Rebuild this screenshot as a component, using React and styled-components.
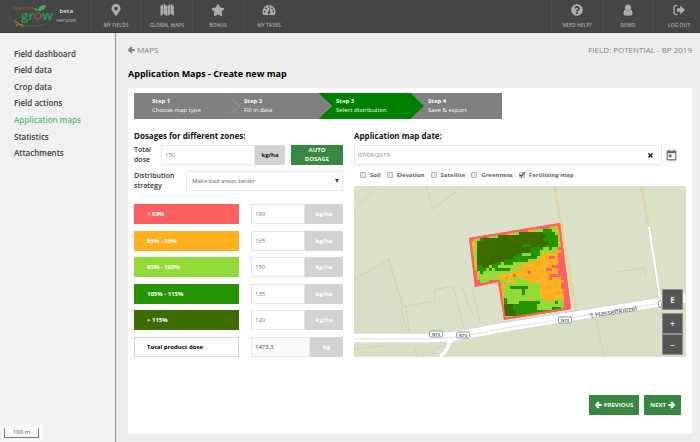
import React from "react";
import styled, { createGlobalStyle, css } from "styled-components";
import { FaMapMarkerAlt, FaStar, FaQuestionCircle, FaTimes } from "react-icons/fa";
import { MdToday } from "react-icons/md";

const GlobalStyle = createGlobalStyle`
  *, *::before, *::after { box-sizing: border-box; }
  body { margin: 0; background: #ededed; }
  body, button, input, select {
    font-family: "Open Sans", "Noto Sans", sans-serif;
    font-size: 6px;
    line-height: 10px;
    color: #333;
  }
  button { cursor: pointer; }
`;

const Page = styled.div`
  display: flex;
  flex-direction: column;
  min-height: 100vh;
`;

const TopBar = styled.header`
  display: flex;
  height: 33px;
  overflow: hidden;
  background: #454545;
  border-bottom: 1px solid #3a3a3a;
`;

const Brand = styled.a`
  display: flex;
  align-items: center;
  gap: 2px;
  width: 90px;
  padding-left: 12px;
  text-decoration: none;
  color: #bdbdbd;
`;

const BrandNote = styled.span`
  line-height: 9px;
  text-align: center;
  strong { display: block; color: #cfcfcf; }
`;

const TopNav = styled.nav`
  display: flex;
  flex: 1;
  margin-right: -4px;
`;

const TopLink = styled.a`
  display: flex;
  flex-direction: column;
  align-items: center;
  gap: 4px;
  width: 51px;
  padding-top: 4px;
  border-left: 1px solid #4f4f4f;
  color: #adadad;
  font-size: 5px;
  font-weight: 600;
  line-height: 10px;
  white-space: nowrap;
  text-decoration: none;
  margin-left: ${(p) => (p.$push ? "auto" : "0")};
  svg { width: 14px; height: 12px; flex: none; }
`;

const Body = styled.div`
  display: flex;
  flex: 1;
`;

const Sidebar = styled.aside`
  display: flex;
  flex-direction: column;
  width: 116px;
  padding-top: 13px;
  background: #f0f0f0;
  border-right: 1px solid #8d8d8d;
`;

const SideList = styled.ul`
  display: grid;
  grid-auto-rows: 1fr;
  align-items: center;
  height: 116px;
  margin: 0;
  padding: 0 0 0 14px;
  list-style: none;
`;

const SideLink = styled.a`
  font-size: 8px;
  font-weight: 600;
  text-decoration: none;
  color: ${(p) => (p.$active ? "#5cb973" : "#3a3a3a")};
`;

const ScaleBox = styled.div`
  align-self: flex-start;
  margin: auto 0 1px 1px;
  padding: 3px;
  background: #f8f8f8;
`;

const ScaleBar = styled.div`
  width: 35px;
  border: 1px solid #777;
  border-top: 0;
  line-height: 9px;
  text-align: center;
  color: #555;
`;

const Main = styled.main`
  display: flex;
  flex-direction: column;
  flex: 1;
  min-width: 0;
  padding: 11px 8px 8px 12px;
`;

const Crumbs = styled.div`
  display: flex;
  justify-content: space-between;
  font-size: 8px;
  font-weight: 500;
  line-height: 12px;
  color: #80807a;
`;

const BackLink = styled.a`
  display: flex;
  align-items: center;
  gap: 2px;
  color: inherit;
  text-decoration: none;
`;

const Title = styled.h1`
  margin: 11px 0 7px;
  font-size: 9px;
  font-weight: 700;
  line-height: 14px;
  color: #000;
`;

const Panel = styled.section`
  flex: 1;
  padding: 5px 6px;
  background: #fff;
`;

const Steps = styled.ol`
  display: grid;
  grid-template-columns: repeat(4, 92px);
  margin: 0;
  padding: 0;
  list-style: none;
`;

const chevron = css`
  content: "";
  position: absolute;
  top: 0;
  left: 100%;
  width: 13px;
  height: 100%;
  clip-path: polygon(0 0, 100% 50%, 0 100%);
`;

const Step = styled.li`
  position: relative;
  z-index: ${(p) => p.$order};
  height: 26px;
  padding: 4px 0 0 18px;
  background: ${(p) => (p.$active ? "#008000" : "#808080")};
  color: #fff;
  line-height: 9px;
  strong { display: block; }
  &::before { ${chevron} width: 14px; background: ${(p) => (p.$active ? "#008000" : "#a0a0a0")}; }
  &::after { ${chevron} background: ${(p) => (p.$active ? "#008000" : "#808080")}; }
  &:last-child::before, &:last-child::after { content: none; }
`;

const Columns = styled.div`
  display: grid;
  grid-template-columns: minmax(0, 209fr) minmax(0, 332fr);
  gap: 11px;
  margin-top: 11px;
`;

const Column = styled.div`
  display: flex;
  flex-direction: column;
  min-width: 0;
`;

const Heading = styled.h2`
  margin: 0 0 3px;
  font-size: 8px;
  font-weight: 700;
  line-height: 12px;
  color: #111;
`;

const Field = styled.div`
  display: flex;
  align-items: center;
  margin-bottom: 6px;
`;

const FieldLabel = styled.label`
  flex: none;
  width: ${(p) => (p.$wide ? "52px" : "27px")};
  font-size: 7px;
  font-weight: 600;
`;

const Input = styled.input`
  flex: 1;
  min-width: 0;
  height: 20px;
  padding: 0 3px;
  border: 1px solid #e6e6e6;
  background: ${(p) => (p.readOnly ? "#f8fafa" : "#fff")};
  color: ${(p) => (p.readOnly ? "#444" : "#757575")};
`;

const Unit = styled.span`
  flex: none;
  width: ${(p) => (p.$narrow ? "33px" : p.$strong ? "30px" : "38px")};
  background: #d2d2d2;
  color: ${(p) => (p.$strong ? "#111" : "#fff")};
  font-weight: 700;
  line-height: 20px;
  text-align: center;
`;

const GreenButton = styled.button`
  display: flex;
  align-items: center;
  justify-content: center;
  gap: 2px;
  height: 20px;
  padding: 0 6px;
  border: 0;
  background: #388743;
  color: #f4faf4;
  font-weight: 700;
  line-height: 9px;
`;

const AutoButton = styled(GreenButton)`
  width: 52px;
  margin-left: 6px;
  padding: 0 12px;
`;

const SelectWrap = styled.div`
  position: relative;
  flex: 1;
  &::after {
    content: "";
    position: absolute;
    right: 4px;
    top: 8px;
    border: 2px solid transparent;
    border-top: 4px solid #444;
    border-bottom: 0;
  }
`;

const Select = styled.select`
  display: block;
  width: 100%;
  height: 20px;
  padding: 0 5px;
  border: 1px solid #e6e6e6;
  border-radius: 0;
  appearance: none;
  background: #fff;
  color: #666;
`;

const Zones = styled.div`
  display: flex;
  flex: 1;
  flex-direction: column;
  justify-content: space-between;
  margin-top: 7px;
`;

const Zone = styled.div`
  display: grid;
  grid-template-columns: minmax(0, 105fr) minmax(0, 92fr);
  gap: 12px;
`;

const ZoneLabel = styled.label`
  padding-left: 13px;
  background: ${(p) => p.$color};
  color: ${(p) => (p.$total ? "#000" : "#fff")};
  box-shadow: ${(p) => (p.$total ? "inset 0 0 0 1px #d0d0d0" : "none")};
  font-weight: 700;
  line-height: 20px;
  white-space: nowrap;
`;

const Dose = styled.div`
  display: flex;
`;

const DateBox = styled.div`
  position: relative;
  display: flex;
  flex: 1;
`;

const ClearButton = styled.button`
  position: absolute;
  top: 5px;
  right: 6px;
  display: flex;
  padding: 2px;
  border: 0;
  background: none;
  color: #111;
`;

const CalendarButton = styled.button`
  display: flex;
  width: 24px;
  padding: 0 0 0 3px;
  border: 0;
  background: none;
  color: #666;
`;

const Layers = styled.div`
  display: flex;
  gap: 6px;
  height: 18px;
  margin-top: -3px;
  padding: 2px 0 6px 6px;
`;

const LayerLabel = styled.label`
  display: flex;
  align-items: center;
  gap: 4px;
  font-weight: 700;
  color: #666;
`;

const Check = styled.input`
  appearance: none;
  width: 6px;
  height: 6px;
  margin: 0;
  border: 1px solid #b5b5b5;
  border-radius: 1px;
  background: #e8e8e8;
  &:checked::after {
    content: "";
    display: block;
    width: 6px;
    height: 5px;
    margin: -1px;
    background: #333;
    clip-path: polygon(15% 50%, 40% 70%, 90% 0, 100% 15%, 45% 100%, 5% 65%);
  }
`;

const MapFrame = styled.div`
  position: relative;
  svg { display: block; width: 100%; height: auto; }
`;

const MapControls = styled.div`
  position: absolute;
  right: 3px;
  bottom: 2px;
  display: flex;
  flex-direction: column;
`;

const MapButton = styled.button`
  width: 21px;
  height: 21px;
  margin-bottom: ${(p) => (p.$apart ? "3px" : "0")};
  padding: 0;
  border: 1px solid #8f8f88;
  background: #555;
  color: #eee;
  font-size: 8px;
  font-weight: 700;
`;

const Actions = styled.div`
  display: flex;
  justify-content: flex-end;
  gap: 5px;
  margin: 38px 5px 0 0;
`;

const Logo = () => (
  <svg width="42" height="25" viewBox="0 0 42 25" role="img" aria-label="watchitgrow">
    <path d="M2 16C0 20 9 22 20 22C32 22 40 18 38 14C37 12 32 12 28 12" fill="none" stroke="#2c7d41" strokeWidth="0.8" />
    <path d="M9 13C4 14 2 16 3 18" fill="none" stroke="#2c7d41" strokeWidth="0.7" />
    <text x="1" y="6" fontFamily="Open Sans, sans-serif" fontSize="6" fill="#96603a">watchit</text>
    <g fontFamily="Open Sans, sans-serif" fontSize="13" fontWeight="700" fill="#2f9249">
      <text x="9" y="16">gr</text>
      <text x="30" y="16">w</text>
    </g>
    <circle cx="26" cy="12" r="3" fill="none" stroke="#8b5636" strokeWidth="1.6" />
    <path d="M26 8C26 6 25 4 22 4C22 6 24 7 26 7C26 3 29 1 34 1C34 5 30 7 26 7" fill="#3fae52" />
    <path d="M3 17L6 19L11 23M6 20L4 22M8 21L11 20" fill="none" stroke="#b36f31" strokeWidth="1.3" />
  </svg>
);

const ArrowIcon = styled.svg.attrs({
  width: 7,
  height: 8,
  viewBox: "0 0 7 8",
  fill: "none",
  stroke: "currentColor",
  strokeWidth: 2,
  children: <path d="M3.9 1L1.2 4L3.9 7M1.4 4H6.8" />,
})`
  flex: none;
  transform: ${(p) => (p.$right ? "rotate(180deg)" : "none")};
`;

const FoldedMapIcon = () => (
  <svg viewBox="0 0 14 12" fill="currentColor">
    <path d="M.5 2L3.5 0V10L.5 12ZM4 0L7 2V12L4 10ZM7.5 2L10.5 0V10L7.5 12ZM11 0L13.8 2V12L11 10Z" />
  </svg>
);

const GaugeIcon = () => (
  <svg viewBox="0 0 14 12" fill="currentColor">
    <path d="M7 1A6.5 6.5 0 0 0 .5 7.5Q.5 9.5 1.5 11H12.5Q13.5 9.5 13.5 7.5A6.5 6.5 0 0 0 7 1Z" />
    <g fill="#454545">
      <circle cx="2.7" cy="7.5" r=".9" />
      <circle cx="4" cy="4.5" r=".9" />
      <circle cx="7" cy="3.1" r=".9" />
      <circle cx="10" cy="4.5" r=".9" />
      <circle cx="11.3" cy="7.5" r=".9" />
      <path d="M7.4 4.6L8.2 4.8L7.7 7.6A1.4 1.4 0 1 1 6.7 7.4Z" />
    </g>
  </svg>
);

const UserIcon = () => (
  <svg viewBox="0 0 14 12" fill="currentColor">
    <circle cx="7" cy="3.4" r="3" />
    <path d="M4.3 5.6Q2.4 6.3 2.4 9.6Q2.4 11.6 4.2 11.6H9.8Q11.6 11.6 11.6 9.6Q11.6 6.3 9.7 5.6Q7 7.8 4.3 5.6Z" />
  </svg>
);

const SignOutIcon = () => (
  <svg viewBox="0 0 14 12" fill="currentColor">
    <path d="M5.5 1.6H3.6Q2 1.6 2 3.2V8.8Q2 10.4 3.6 10.4H5.5" fill="none" stroke="currentColor" strokeWidth="1.3" />
    <path d="M5 4.2H8.3V1.5L13 6L8.3 10.5V7.8H5Z" />
  </svg>
);

const ZONE_COLORS = { R: "#ff5f60", O: "#ffb01f", L: "#92db37", G: "#249500", D: "#3c6b00" };

/* Run lengths per grid row: count followed by the zone code. */
const FIELD_ROWS = [
  "35R",
  "27R2L1O5R",
  "20R2O3L3G1L2O4R",
  "13R2O2L8D4G1L1O4R",
  "4R1L1G1R3L16D4G1O4R",
  "2R1O1L1G20D5G1L4R",
  "1R1O1L24D3G1O4R",
  "1R1O1L15D3G5D4G1L4R",
  "1R1L1O18D4G2L1G2L4R",
  "1R1O1L18D3G5L2O4R",
  "1R1O1L13D2G3L3G1L5O5R",
  "2R1L12D8G1L3O2R1O5R",
  "2R1L9D8G2L8O5R",
  "2R1O6D2G1L3G4L11O5R",
  "2R1O2G2D1L2G6L12O7R",
  "2R1L3G1L1G1L5G4L8O2R2O5R",
  "3R1L1G9L6O1R9O5R",
  "3R1O6L5O1R11O8R",
  "3R7L4O4L9O1R3O4R",
  "4R3L3R3L3O4L8O4O4R",
  "11R1O12L5O1L1O4R",
  "11R1O2L6G4L7O4R",
  "11R1O6L1G5L8O3R",
  "11R1O6L1G5L8O3R",
  "11R1O12L8O3R",
  "11R1O1G7L1O4L4O2L1O3R",
  "11R1O1G4L7G5L1G2L3R",
  "11R1O3D8G9L3R",
  "11R1O3D8G5L3G1L3R",
  "11R1O4D16G3R",
  "12R4D16G3R",
  "12R1O2L5G15R",
];

const fieldCells = FIELD_ROWS.flatMap((row, y) => {
  let x = 0;
  return [...row.matchAll(/(\d+)([A-Z])/g)].map(([, count, code]) => {
    const cell = { x: 8 + x * 3, y: 8 + y * 3, width: count * 3, fill: ZONE_COLORS[code] };
    x += Number(count);
    return cell;
  });
});

const FIELD_OUTLINE = "9,23 100,8 111,94 44,105 38,67 15,72";

const Shield = ({ x, y }) => (
  <g transform={`translate(${x} ${y})`}>
    <rect x="-6.5" y="-3" width="13" height="6" rx="1.5" fill="#fff" stroke="#8b93a8" />
    <text y="1.5" textAnchor="middle" fontSize="4" fontWeight="700" fill="#56607a">N73</text>
  </g>
);

const FieldMap = () => (
  <svg viewBox="0 0 332 171" role="img" aria-label="Fertilizing map" fontFamily="Open Sans, sans-serif">
    <rect width="332" height="171" fill="#dbe1c8" />
    <path d="M0 93L35 73L49 121L52 147H0Z" fill="#d9dcc6" />
    <path d="M0 155L110 151L332 118V171H0Z" fill="#d8dfc3" />
    <g fill="none" stroke="#c6cda6" strokeWidth="0.7">
      <path d="M0 24L24 0M72 0L79 23L104 4V0M0 93L35 73L49 121L81 115L80 104L99 100L110 143" />
      <path d="M47 122L53 145M52 120L55 147M0 163L28 160L27 156M60 160L63 171M79 171Q77 161 90 160" />
      <path d="M120 75L143 70L149 104M120 75L122 96L119 107L126 135M108 101L119 130M263 86L290 82L292 90M242 134L250 171" />
    </g>
    <g fill="none">
      <path d="M200 0L207 37L222 126M287 0L295 41" stroke="#d9ddc0" strokeWidth="4" />
      <path d="M200 0L207 37L222 126M287 0L295 41" stroke="#e3d596" strokeWidth="2" />
      <path d="M295 41L306 112" stroke="#cfcfc9" strokeWidth="3" />
      <path d="M295 41L306 112" stroke="#fff" strokeWidth="2" />
      <path d="M94 152Q99 158 86 171M110 148Q98 153 94 158" stroke="#c9cacc" strokeWidth="5" />
      <path d="M0 152L75 152Q105 151 140 143L332 112" stroke="#c5c7ca" strokeWidth="10" />
      <path d="M94 152Q99 158 86 171M110 148Q98 153 94 158" stroke="#fff" strokeWidth="4" />
      <path d="M0 152L75 152Q105 151 140 143L332 112" stroke="#fff" strokeWidth="9" />
      <path d="M0 153L75 153Q105 152 140 144L332 113" stroke="#d2d4dc" strokeWidth="0.7" />
    </g>
    <clipPath id="field-outline">
      <polygon points={FIELD_OUTLINE} />
    </clipPath>
    <g transform="translate(106 29)">
      <g clipPath="url(#field-outline)">
        {fieldCells.map((cell) => (
          <rect key={`${cell.x}-${cell.y}`} height="3" shapeRendering="crispEdges" {...cell} />
        ))}
        <polygon points={FIELD_OUTLINE} fill="none" stroke={ZONE_COLORS.R} strokeWidth="4" />
      </g>
    </g>
    <Shield x="82" y="148" />
    <Shield x="109" y="149" />
    <Shield x="211" y="134" />
    <Shield x="311" y="118" />
    <text transform="translate(236 132) rotate(-9)" fontSize="7" fill="#444">’t Hasseltkiezel</text>
  </svg>
);

const sideItems = ["Field dashboard", "Field data", "Crop data", "Field actions", "Application maps", "Statistics", "Attachments"];

const steps = [
  ["Step 1", "Choose map type"],
  ["Step 2", "Fill in data"],
  ["Step 3", "Select distribution"],
  ["Step 4", "Save & export"],
];

const zones = [
  ["< 85%", "#ff5f60", "180"],
  ["85% - 95%", "#ffb01f", "165"],
  ["95% - 105%", "#92db37", "150"],
  ["105% - 115%", "#249500", "135"],
  ["> 115%", "#3c6b00", "120"],
];

const layers = ["Soil", "Elevation", "Satellite", "Greenness", "Fertilizing map"];

export default function App() {
  return (
    <Page>
      <GlobalStyle />
      <TopBar>
        <Brand href="#home">
          <Logo />
          <BrandNote><strong>beta</strong>version</BrandNote>
        </Brand>
        <TopNav>
          <TopLink href="#fields"><FaMapMarkerAlt />MY FIELDS</TopLink>
          <TopLink href="#maps"><FoldedMapIcon />GLOBAL MAPS</TopLink>
          <TopLink href="#bonus"><FaStar />BONUS</TopLink>
          <TopLink href="#tasks"><GaugeIcon />MY TASKS</TopLink>
          <TopLink href="#help" $push><FaQuestionCircle />NEED HELP?</TopLink>
          <TopLink href="#account"><UserIcon />DEMO</TopLink>
          <TopLink href="#logout"><SignOutIcon />LOG OUT</TopLink>
        </TopNav>
      </TopBar>
      <Body>
        <Sidebar>
          <nav>
            <SideList>
              {sideItems.map((item) => (
                <li key={item}>
                  <SideLink href="#section" $active={item === "Application maps"}>{item}</SideLink>
                </li>
              ))}
            </SideList>
          </nav>
          <ScaleBox><ScaleBar>100 m</ScaleBar></ScaleBox>
        </Sidebar>
        <Main>
          <Crumbs>
            <BackLink href="#maps"><ArrowIcon />MAPS</BackLink>
            <span>FIELD: POTENTIAL - BP 2019</span>
          </Crumbs>
          <Title>Application Maps - Create new map</Title>
          <Panel>
            <Steps>
              {steps.map(([name, text], i) => (
                <Step key={name} $order={4 - i} $active={i === 2}>
                  <strong>{name}</strong>
                  {text}
                </Step>
              ))}
            </Steps>
            <Columns>
              <Column>
                <Heading>Dosages for different zones:</Heading>
                <Field>
                  <FieldLabel htmlFor="total-dose">Total dose</FieldLabel>
                  <Input id="total-dose" defaultValue="150" />
                  <Unit $strong>kg/ha</Unit>
                  <AutoButton type="button">AUTO DOSAGE</AutoButton>
                </Field>
                <Field>
                  <FieldLabel htmlFor="strategy" $wide>Distribution strategy</FieldLabel>
                  <SelectWrap>
                    <Select id="strategy">
                      <option>Make bad areas better</option>
                    </Select>
                  </SelectWrap>
                </Field>
                <Zones>
                  {zones.map(([name, color, dose], i) => (
                    <Zone key={name}>
                      <ZoneLabel htmlFor={`zone-${i}`} $color={color}>{name}</ZoneLabel>
                      <Dose>
                        <Input id={`zone-${i}`} defaultValue={dose} />
                        <Unit>kg/ha</Unit>
                      </Dose>
                    </Zone>
                  ))}
                  <Zone>
                    <ZoneLabel htmlFor="product-dose" $color="#fff" $total>Total product dose</ZoneLabel>
                    <Dose>
                      <Input id="product-dose" readOnly value="1473.3" />
                      <Unit $narrow>kg</Unit>
                    </Dose>
                  </Zone>
                </Zones>
              </Column>
              <Column>
                <Heading as="label" htmlFor="map-date">Application map date:</Heading>
                <Field>
                  <DateBox>
                    <Input id="map-date" defaultValue="07/06/2019" />
                    <ClearButton type="button" aria-label="Clear date"><FaTimes size={7} /></ClearButton>
                  </DateBox>
                  <CalendarButton type="button" aria-label="Open calendar"><MdToday size={13} /></CalendarButton>
                </Field>
                <Layers>
                  {layers.map((layer) => (
                    <LayerLabel key={layer}>
                      <Check type="checkbox" defaultChecked={layer === "Fertilizing map"} />
                      {layer}
                    </LayerLabel>
                  ))}
                </Layers>
                <MapFrame>
                  <FieldMap />
                  <MapControls>
                    <MapButton type="button" $apart>E</MapButton>
                    <MapButton type="button" aria-label="Zoom in">+</MapButton>
                    <MapButton type="button" aria-label="Zoom out">−</MapButton>
                  </MapControls>
                </MapFrame>
              </Column>
            </Columns>
            <Actions>
              <GreenButton type="button"><ArrowIcon />PREVIOUS</GreenButton>
              <GreenButton type="button">NEXT<ArrowIcon $right /></GreenButton>
            </Actions>
          </Panel>
        </Main>
      </Body>
    </Page>
  );
}
